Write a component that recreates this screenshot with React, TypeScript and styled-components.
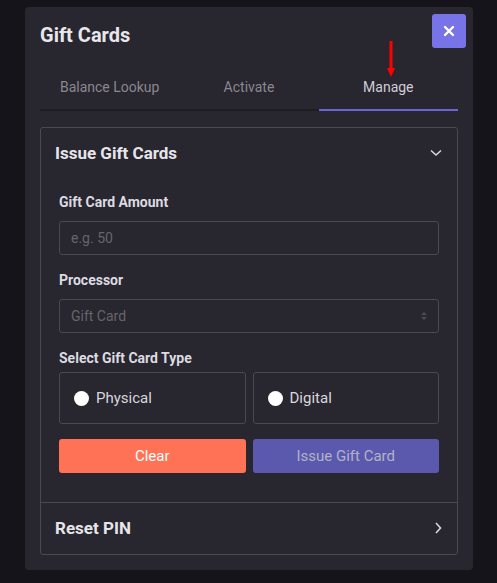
import styled, { createGlobalStyle } from 'styled-components'

const Global = createGlobalStyle`
    body {
        margin: 0;
        background: #15141a;
        font-family: Roboto, "Liberation Sans", sans-serif;
    }
`

const Page = styled.div`
    padding: 7px 0 0 25px;
    min-height: 583px;
    box-sizing: border-box;
`

const Modal = styled.div`
    position: relative;
    width: 448px;
    box-sizing: border-box;
    padding: 15px 15px 15px 15px;
    background: #28262e;
    border-radius: 4px;
`

const Title = styled.h2`
    margin: 0;
    font-size: 20px;
    line-height: 26px;
    font-weight: 700;
    color: #e8e7ec;
`

const CloseBtn = styled.button`
    position: absolute;
    top: 7px;
    right: 7px;
    width: 34px;
    height: 34px;
    border: none;
    border-radius: 3px;
    background: #7874e8;
    display: flex;
    align-items: center;
    justify-content: center;
    padding: 0;
`

const Arrow = styled.svg`
    position: absolute;
    left: 362px;
    top: 34px;
`

const Tabs = styled.div`
    margin-top: 16px;
    display: grid;
    grid-template-columns: repeat(3, 1fr);
    border-bottom: 2px solid #1e1d23;
`

const Tab = styled.div<{ $active?: boolean }>`
    height: 45px;
    display: flex;
    align-items: center;
    justify-content: center;
    font-size: 14px;
    color: ${p => (p.$active ? '#cfcdd6' : '#8a8890')};
    box-shadow: ${p => (p.$active ? 'inset 0 -2px 0 #6a64d4' : 'none')};
    margin-bottom: -2px;
    padding-bottom: 2px;
`

const Card = styled.div`
    margin-top: 16px;
    border: 1px solid #4a4850;
    border-radius: 3px;
`

const CardHead = styled.div`
    display: flex;
    align-items: center;
    justify-content: space-between;
    padding: 13px 15px 14px 14px;
    font-size: 17px;
    line-height: 24px;
    font-weight: 700;
    color: #e6e5ea;
`

const CardBody = styled.div`
    padding: 14px 18px 29px 18px;
    border-bottom: 1px solid #4a4850;
`

const Label = styled.div`
    font-size: 14px;
    line-height: 18px;
    font-weight: 700;
    color: #dcdbe1;
    margin-bottom: 10px;
`

const Field = styled.div`
    display: flex;
    align-items: center;
    justify-content: space-between;
    height: 34px;
    box-sizing: border-box;
    border: 1px solid #4a4850;
    border-radius: 3px;
    padding: 0 11px;
    font-size: 14px;
    color: #66646c;
    margin-bottom: 16px;
`

const Options = styled.div`
    margin-top: -5px;
    display: grid;
    grid-template-columns: 1fr 1fr;
    gap: 7px;
`

const Option = styled.label`
    height: 52px;
    box-sizing: border-box;
    border: 1px solid #4a4850;
    border-radius: 3px;
    display: flex;
    align-items: center;
    gap: 7px;
    padding-left: 14px;
    font-size: 15px;
    color: #d8d7dd;
`

const Radio = styled.span`
    width: 15px;
    height: 15px;
    border-radius: 50%;
    background: #ffffff;
`

const Buttons = styled.div`
    margin-top: 15px;
    display: grid;
    grid-template-columns: 1fr 1fr;
    gap: 7px;
`

const Btn = styled.button<{ $bg: string; $fg: string }>`
    height: 34px;
    border: none;
    border-radius: 3px;
    background: ${p => p.$bg};
    color: ${p => p.$fg};
    font-family: inherit;
    font-size: 15px;
`

function Chevron({ dir }: { dir: 'down' | 'right' }) {
    return dir === 'down' ? (
        <svg width="12" height="8" viewBox="0 0 12 8">
            <path d="M1 1.5 L6 6 L11 1.5" fill="none" stroke="#d8d7dd" strokeWidth="1.6" />
        </svg>
    ) : (
        <svg width="8" height="12" viewBox="0 0 8 12">
            <path d="M2 1 L6.5 6 L2 11" fill="none" stroke="#d8d7dd" strokeWidth="1.6" />
        </svg>
    )
}

export default function App() {
    return (
        <Page>
            <Global />
            <Modal>
                <Title>Gift Cards</Title>
                <CloseBtn>
                    <svg width="12" height="12" viewBox="0 0 12 12">
                        <path d="M2 2 L10 10 M10 2 L2 10" stroke="#fff" strokeWidth="2.4" strokeLinecap="round" />
                    </svg>
                </CloseBtn>
                <Arrow width="8" height="36" viewBox="0 0 8 36">
                    <rect x="2.5" y="0" width="3" height="29" fill="#f00" />
                    <path d="M0 27 L8 27 L4 36 Z" fill="#f00" />
                </Arrow>
                <Tabs>
                    <Tab>Balance Lookup</Tab>
                    <Tab>Activate</Tab>
                    <Tab $active>Manage</Tab>
                </Tabs>
                <Card>
                    <CardHead>
                        Issue Gift Cards
                        <Chevron dir="down" />
                    </CardHead>
                    <CardBody>
                        <Label>Gift Card Amount</Label>
                        <Field>e.g. 50</Field>
                        <Label>Processor</Label>
                        <Field>
                            Gift Card
                            <svg width="6" height="10" viewBox="0 0 6 10">
                                <path d="M0 4 L3 1 L6 4 Z M0 6 L3 9 L6 6 Z" fill="#4c4a52" />
                            </svg>
                        </Field>
                        <Label>Select Gift Card Type</Label>
                        <Options>
                            <Option><Radio />Physical</Option>
                            <Option><Radio />Digital</Option>
                        </Options>
                        <Buttons>
                            <Btn $bg="#ff7255" $fg="#ffffff">Clear</Btn>
                            <Btn $bg="#5b59ae" $fg="#b3b1c6">Issue Gift Card</Btn>
                        </Buttons>
                    </CardBody>
                    <CardHead>
                        Reset PIN
                        <Chevron dir="right" />
                    </CardHead>
                </Card>
            </Modal>
        </Page>
    )
}
